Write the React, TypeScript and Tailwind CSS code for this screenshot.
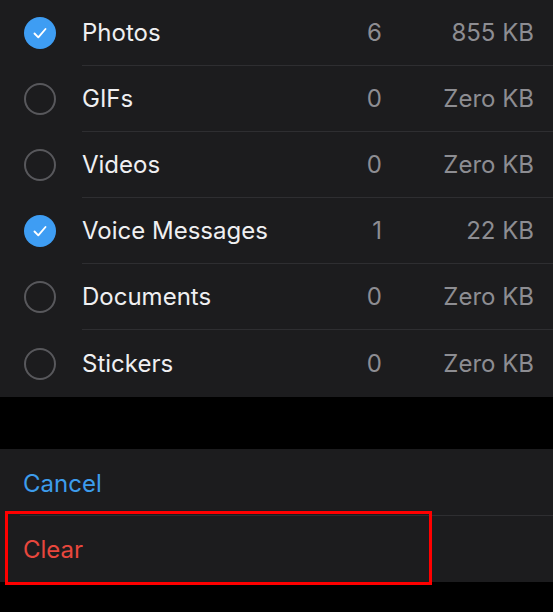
const ROWS = [
  { name: "Photos", count: 6, size: "855 KB", checked: true },
  { name: "GIFs", count: 0, size: "Zero KB", checked: false },
  { name: "Videos", count: 0, size: "Zero KB", checked: false },
  { name: "Voice Messages", count: 1, size: "22 KB", checked: true },
  { name: "Documents", count: 0, size: "Zero KB", checked: false },
  { name: "Stickers", count: 0, size: "Zero KB", checked: false },
];

function Check({ on }: { on: boolean }) {
  if (on) {
    return (
      <div className="w-[32px] h-[32px] rounded-full bg-[#3e9df3] flex items-center justify-center shrink-0">
        <svg width="20" height="20" viewBox="0 0 20 20" fill="none">
          <path d="M4.5 10.5l3.8 3.8L15.5 6" stroke="white" strokeWidth="1.9" strokeLinecap="round" strokeLinejoin="round" />
        </svg>
      </div>
    );
  }
  return <div className="w-[32px] h-[32px] rounded-full border-2 border-[#58585c] shrink-0" />;
}

export default function App() {
  return (
    <div className="relative w-[553px] h-[612px] bg-black overflow-hidden font-['Inter',sans-serif] text-[24px]">
      <div className="bg-[#1c1c1e]">
        {ROWS.map((r, i) => (
          <div key={r.name} className={`flex items-center pl-[24px] ${i === ROWS.length - 1 ? "h-[67px]" : "h-[66px]"}`}>
            <Check on={r.checked} />
            <div
              className={`flex-1 h-full flex items-center ml-[26px] pr-[19px] ${
                i === ROWS.length - 1 ? "" : "border-b border-[#2e2e31]"
              }`}
            >
              <span className="flex-1 text-[#efeff1]">{r.name}</span>
              <span className="w-[40px] text-right text-[#8d8d92] -mr-[1px]">{r.count}</span>
              <span className="w-[153px] text-right text-[#8d8d92]">{r.size}</span>
            </div>
          </div>
        ))}
      </div>

      <div className="mt-[52px] bg-[#1c1c1e]">
        <div className="h-[66px] flex items-center pl-[23px] pt-[4px] text-[#3d9cec]">Cancel</div>
        <div className="h-[67px] ml-[20px] border-t border-[#2e2e31] flex items-center pl-[3px] pt-[2px] text-[#e8473d]">
          Clear
        </div>
      </div>

      <div className="absolute left-[5px] top-[511px] w-[427px] h-[74px] border-[3px] border-[#ff0000]" />
    </div>
  );
}
